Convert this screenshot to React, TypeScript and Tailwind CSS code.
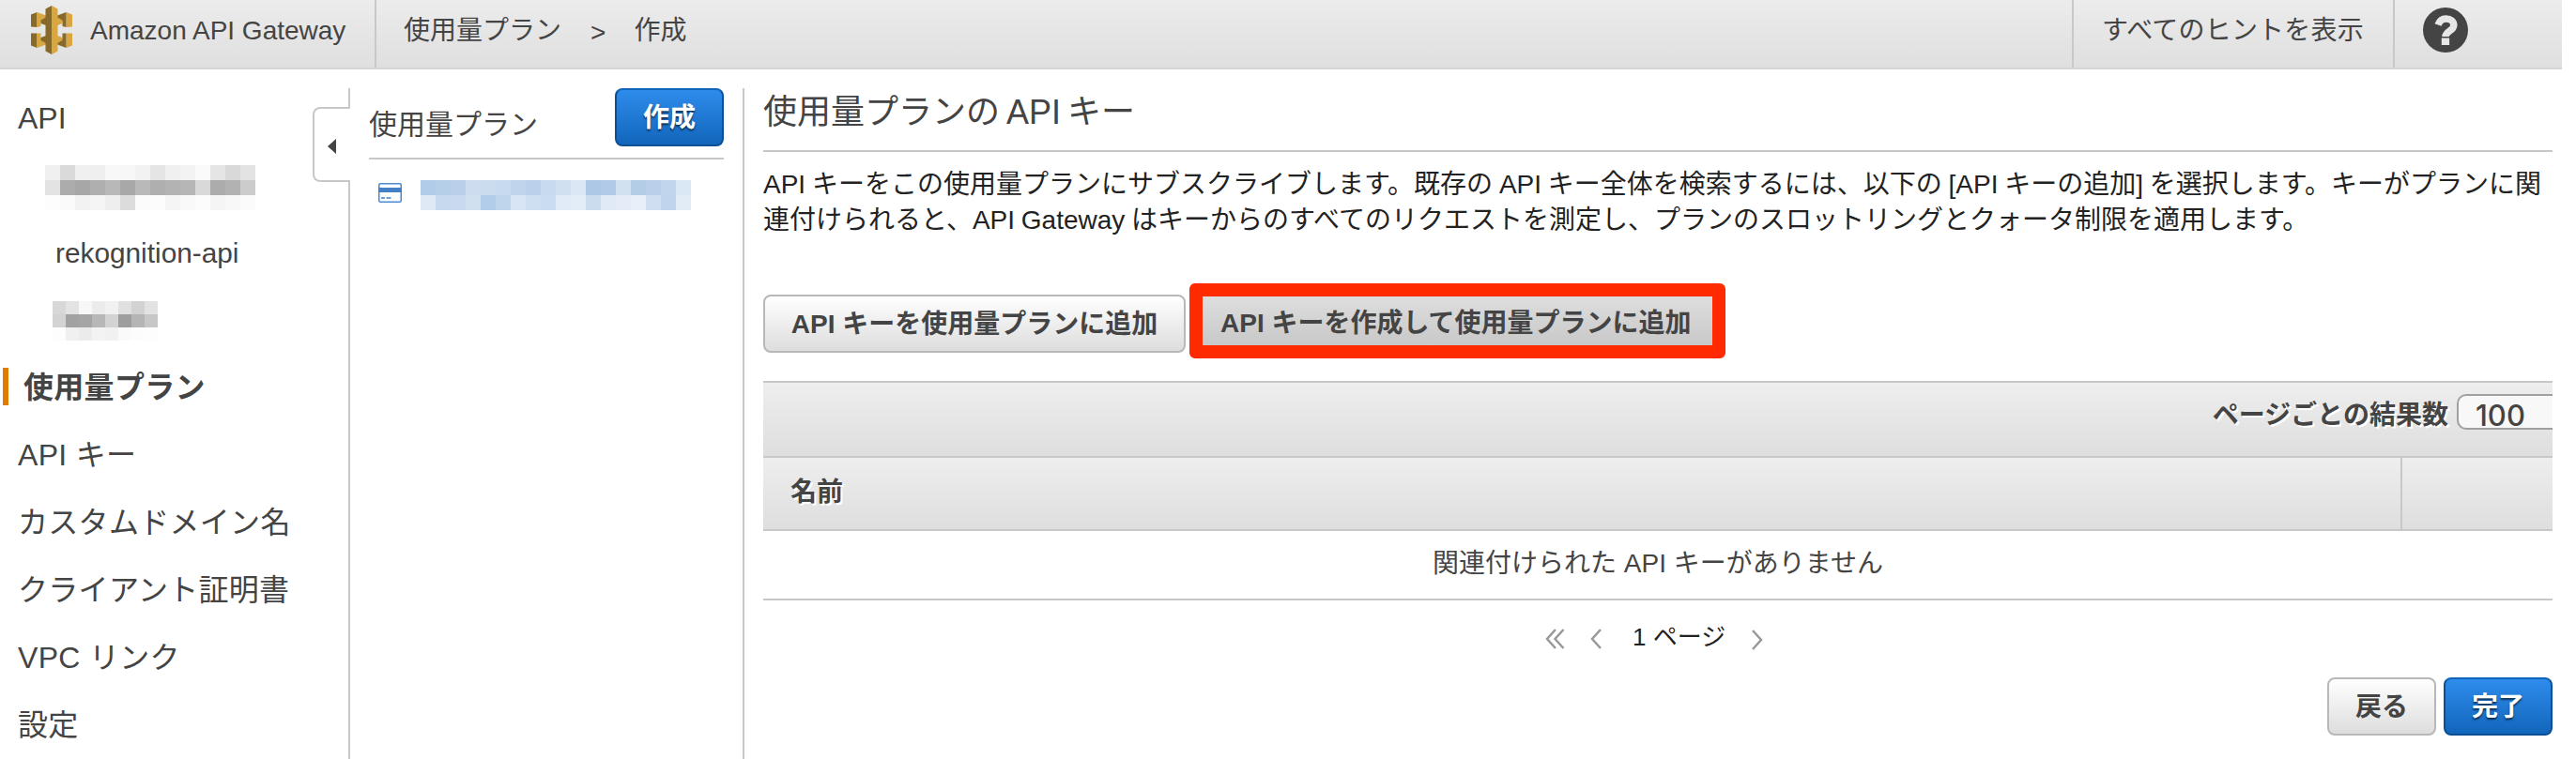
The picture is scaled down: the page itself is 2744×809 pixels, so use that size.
import React from "react";

const greyRows = [
  ["#f0f0f0", "#dadada", "#f0f0f0", "#efefef", "#f8f8f8", "#f7f7f7", "#f2f2f2", "#e5e5e5", "#f0f0f0", "#f3f3f3", "#fafafa", "#e5e5e5", "#d9d9d9", "#e3e3e3"],
  ["#e3e3e3", "#acacac", "#a7a7a7", "#afafaf", "#b8b8b8", "#a8a8a8", "#b9b9b9", "#afafaf", "#b3b3b3", "#b6b6b6", "#d9d9d9", "#acacac", "#b2b2b2", "#cccccc"],
  ["#fdfdfd", "#fafafa", "#f2f2f2", "#f5f5f5", "#eeeeee", "#dcdcdc", "#fbfbfb", "#fcfcfc", "#f5f5f5", "#f9f9f9", "#fcfcfc", "#f5f5f5", "#f8f8f8", "#fbfbfb"],
];

const shortRows = [
  ["#d8d8d8", "#e3e3e3", "#f7f7f7", "#ebebeb", "#f1f1f1", "#e0e0e0", "#d2d2d2", "#e2e2e2"],
  ["#d3d3d3", "#a2a2a2", "#a5a5a5", "#b7b7b7", "#d3d3d3", "#9e9e9e", "#b5b5b5", "#c7c7c7"],
  ["#fdfdfd", "#f0f0f0", "#ebebeb", "#f3f3f3", "#f1f1f1", "#fafafa", "#fcfcfc", "#fdfdfd"],
];

const blueRows = [
  ["#b1cce8", "#b5cfe9", "#b9d0ea", "#cdddef", "#cbdcee", "#c8daef", "#c0d5ec", "#bad1eb", "#c7daf0", "#d1e0f0", "#dbe7f4", "#adc8e6", "#b0cae8", "#d1e1f0", "#b3cde6", "#b8d0e9", "#c1d5ed", "#dae7f5"],
  ["#dfe9f5", "#c7d9ee", "#c9daef", "#d1e0ef", "#b1cde9", "#bfd5ec", "#d7e5f4", "#cddff0", "#c9dcf1", "#e0ebf7", "#e3edf7", "#cbdcee", "#e0eaf6", "#e4ecf8", "#e8eff9", "#cfdff1", "#c0d4ed", "#e1ecf7"],
];

function Mosaic({ rows, cell }: { rows: string[][]; cell: string }) {
  return (
    <div className="flex flex-col">
      {rows.map((row, i) => (
        <div key={i} className="flex">
          {row.map((c, j) => (
            <span key={j} className={cell} style={{ backgroundColor: c }} />
          ))}
        </div>
      ))}
    </div>
  );
}

function Logo() {
  return (
    <svg className="h-[52px] w-[44px]" viewBox="0 0 44 52">
      <path d="M0 9.500 6.500 7v16L0 22.500z" fill="#876929" />
      <path d="M6.500 7l9.500 3.500V16l-5.500 1v5l-4 1z" fill="#d9a741" />
      <path d="M10.500 15.500l5.500-3V21l-5.500-2z" fill="#876929" />
      <path d="M0 29.500h6.500V45L0 42.500z" fill="#876929" />
      <path d="M6.500 29.500h4V35l5.500 1v5.500L6.500 45z" fill="#d9a741" />
      <path d="M10.500 34l5.500-2v8l-5.500-3z" fill="#876929" />
      <path d="M44 9.500 37.500 7v16l6.500-.5z" fill="#d9a741" />
      <path d="M37.500 7 28 10.500V16l5.500 1v5l4 1z" fill="#876929" />
      <path d="M33.500 15.500l-5.500-3V21l5.500-2z" fill="#d9a741" />
      <path d="M44 29.500h-6.500V45l6.500-2.500z" fill="#d9a741" />
      <path d="M37.500 29.500h-4V35L28 36v5.500l9.500 3.500z" fill="#876929" />
      <path d="M33.500 34 28 32v8l5.500-3z" fill="#d9a741" />
      <path d="M15.500 3.500 22 0v52l-6.500-3.500z" fill="#876929" />
      <path d="M22 0l6.500 3.500v45L22 52z" fill="#d9a741" />
    </svg>
  );
}

function Button({ label, primary = false, className = "" }: { label: React.ReactNode; primary?: boolean; className?: string }) {
  return (
    <button
      className={
        (primary
          ? "border-[#0b4f94] border-t-[#0f64b8] bg-linear-to-b from-[#2e8cec] to-[#1166bb] text-white [text-shadow:0_2px_2px_rgba(0,0,0,0.6)] "
          : "border-[#b8b8b8] bg-linear-to-b from-white to-[#dddddd] text-[#444] ") +
        "flex h-[62px] shrink-0 items-center justify-center whitespace-nowrap rounded-lg border-2 pt-px text-[28px] font-bold leading-none " +
        className
      }
    >
      {label}
    </button>
  );
}

const links = ["API キー", "カスタムドメイン名", "クライアント証明書", "VPC リンク", "設定"];

export default function App() {
  return (
    <div className="flex h-[809px] w-[2744px] flex-col overflow-hidden bg-white font-['Liberation_Sans','Noto_Sans_CJK_JP',sans-serif] text-[28px] leading-[38px] text-[#444]">
      <header className="flex h-[74px] w-[2729px] shrink-0 border-b-2 border-[#d5d5d5] bg-linear-to-b from-[#ececec] to-[#dfdfdf]">
        <div className="flex w-[401px] shrink-0 border-r-2 border-[#c8c8c8] pl-[33px]">
          <div className="pt-[6px]"><Logo /></div>
          <span className="ml-[19px] mt-[14px] whitespace-nowrap">Amazon API Gateway</span>
        </div>
        <nav className="flex flex-1 whitespace-pre pl-[29px] pt-[14px]">
          <span>使用量プラン</span>
          <span className="ml-[31px] mt-[2px]">&gt;</span>
          <span className="ml-[30px]">作成</span>
        </nav>
        <div className="w-[344px] shrink-0 whitespace-nowrap border-x-2 border-[#c8c8c8] pl-[30px] pt-[14px] tracking-[0.2px]">すべてのヒントを表示</div>
        <div className="w-[178px] shrink-0 pl-[30px] pt-[8px]">
          <svg className="size-[48px]" viewBox="0 0 48 48">
            <circle cx="24" cy="24" r="24" fill="#444" />
            <path d="M16 18.500c1.500-4 4.500-6.500 8.500-6.500 5 0 8.300 2.800 8.300 7 0 6-8.800 6-8.800 12" fill="none" stroke="#e6e6e6" strokeWidth="7.500" />
            <rect x="19.800" y="32.500" width="8.300" height="7.500" fill="#e6e6e6" />
          </svg>
        </div>
      </header>

      <div className="flex flex-1 pt-[20px]">
        <aside className="flex w-[333px] shrink-0 flex-col text-[32px]">
          <div className="pl-[19px] pt-[13px]">API</div>
          <div className="h-[48px] pl-[48px] pt-[31px]"><Mosaic rows={greyRows} cell="size-4" /></div>
          <div className="pl-[59px] pt-[58px] text-[29.8px]">rekognition-api</div>
          <div className="h-[57px] pl-[56px] pt-[32px]"><Mosaic rows={shortRows} cell="size-[14px]" /></div>
          <div className="mt-[46px] flex h-10 items-center pl-[3px]">
            <span className="h-10 w-[6px] bg-[#e07b00]" />
            <span className="pl-[16px] pt-[2px] font-bold tracking-[0.3px]">使用量プラン</span>
          </div>
          <ul className="flex flex-col pl-[19px] pt-[17px] tracking-[0.3px]">
            {links.map((l) => (
              <li key={l} className="flex h-[72px] items-center whitespace-nowrap">{l}</li>
            ))}
          </ul>
        </aside>

        <div className="flex w-[40px] shrink-0 flex-col">
          <div className="h-[21px] border-r-2 border-[#c8c8c8]" />
          <div className="-mt-px flex h-[80px] items-center rounded-l-lg border-2 border-r-0 border-[#c8c8c8] pl-[14px] pt-[4px]">
            <svg className="h-4 w-[9px]" viewBox="0 0 9 16"><path d="M9 0v16L0 8z" fill="#444" /></svg>
          </div>
          <div className="-mt-px flex-1 border-r-2 border-[#c8c8c8]" />
        </div>

        <section className="w-[420px] shrink-0 border-r-2 border-[#c8c8c8] pl-[20px] pr-[20px]">
          <div className="flex h-[76px] justify-between border-b-2 border-[#c8c8c8]">
            <h2 className="whitespace-nowrap pt-[20px] text-[30px]">使用量プラン</h2>
            <Button label="作成" primary className="w-[116px]" />
          </div>
          <div className="flex pt-[22px]">
            <svg className="ml-[10px] mt-[3px] h-[21px] w-[25px]" viewBox="0 0 25 21">
              <rect x="0.750" y="0.750" width="23.500" height="19.500" rx="1.500" fill="#fff" stroke="#4a8ad0" strokeWidth="1.500" />
              <rect x="0" y="5" width="25" height="5" fill="#4280c8" />
              <path d="M3 16h4M8.500 16h5" stroke="#4280c8" strokeWidth="1.500" />
            </svg>
            <div className="ml-[20px]"><Mosaic rows={blueRows} cell="size-4" /></div>
          </div>
        </section>

        <main className="flex w-[1926px] shrink-0 flex-col pl-[20px]">
          <h1 className="h-[68px] border-b-2 border-[#c8c8c8] pt-[7px] text-[36px] [word-spacing:-3px]">使用量プランの API キー</h1>
          <p className="whitespace-nowrap pt-[16px] text-[#222] [word-spacing:-1px]">
            API キーをこの使用量プランにサブスクライブします。既存の API キー全体を検索するには、以下の [API キーの追加] を選択します。キーがプランに関<br />
            連付けられると、API Gateway はキーからのすべてのリクエストを測定し、プランのスロットリングとクォータ制限を適用します。
          </p>
          <div className="mt-[48px] flex h-[80px] items-start">
            <Button label="API キーを使用量プランに追加" className="mt-[12px] w-[450px]" />
            <button className="ml-[4px] flex h-[80px] w-[571px] items-center whitespace-nowrap rounded-md border-[14px] border-[#ff2a00] bg-linear-to-b from-[#dedede] to-[#c8c8c8] pl-[19px] pt-[6px] font-bold">
              API キーを作成して使用量プランに追加
            </button>
          </div>

          <div className="mt-[24px] border-b-2 border-t-2 border-[#c8c8c8]">
            <div className="flex h-[78px] justify-end overflow-hidden bg-linear-to-b from-[#eeeeee] to-[#dedede] pt-[12px] font-bold">
              <span className="whitespace-nowrap pt-[4px] [text-shadow:2px_2px_0_#fff]">ページごとの結果数</span>
              <div className="ml-[9px] h-[38px] w-[102px] rounded-l-[10px] border-2 border-r-0 border-[#a0a0a0] bg-[#f8f8f8] pl-[18px] font-['Inter','Noto_Sans_CJK_JP',sans-serif] text-[31px] font-medium leading-[41px]">100</div>
            </div>
            <div className="flex h-[80px] border-y-2 border-[#c8c8c8] bg-linear-to-b from-[#eeeeee] to-[#dedede] font-bold">
              <div className="w-[1746px] border-r-2 border-[#c8c8c8] pl-[29px] pt-[18px] [text-shadow:2px_2px_0_#fff]">名前</div>
            </div>
            <div className="h-[72px] pt-[16px] text-center">関連付けられた API キーがありません</div>
          </div>

          <div className="flex h-[82px] pl-[833px] pt-[21px] text-[#222]">
            <svg className="mt-[9px] h-[22px] w-[21px] shrink-0" viewBox="0 0 21 22" fill="none" stroke="#999" strokeWidth="2.500"><path d="M11 1 2 11l9 10M19.500 1l-9 10 9 10" /></svg>
            <svg className="ml-[27px] mt-[9px] h-[22px] w-[12px] shrink-0" viewBox="0 0 12 22" fill="none" stroke="#999" strokeWidth="2.500"><path d="M11 1 2 11l9 10" /></svg>
            <span className="-mt-px ml-[33px] w-[102px] whitespace-nowrap text-[26px]">1 ページ</span>
            <svg className="ml-[25px] mt-[10px] h-[22px] w-[12px] shrink-0" viewBox="0 0 12 22" fill="none" stroke="#999" strokeWidth="2.500"><path d="m1 1 9 10-9 10" /></svg>
          </div>
          <div className="flex justify-end gap-2">
            <Button label="戻る" className="w-[116px]" />
            <Button label="完了" primary className="w-[116px]" />
          </div>
        </main>
      </div>
    </div>
  );
}
